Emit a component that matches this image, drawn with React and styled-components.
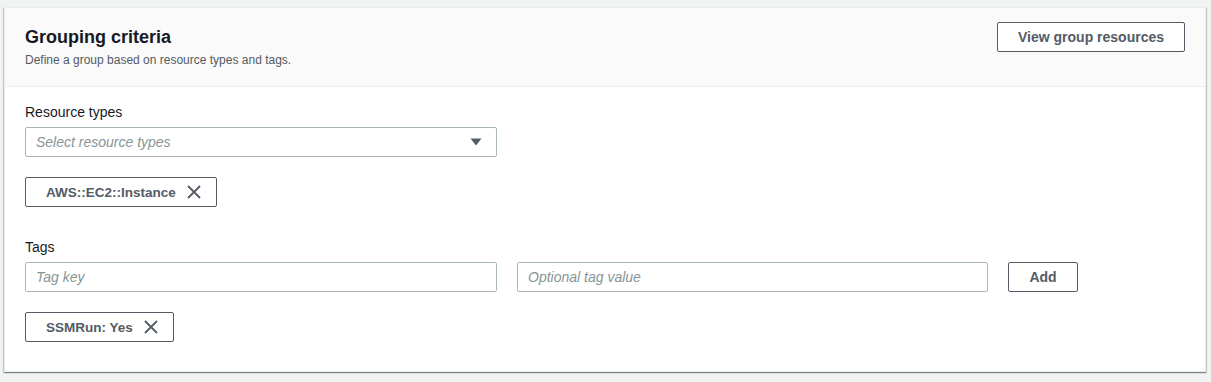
import React from "react";
import styled, { createGlobalStyle } from "styled-components";

const Global = createGlobalStyle`
  html, body { margin: 0; padding: 0; background: #f2f3f3; }
  body { font-family: "Liberation Sans", Arial, sans-serif; color: #16191f; }
  * { box-sizing: border-box; }
`;

const Page = styled.div`
  padding: 7px 5px 9px 4px;
`;

const Card = styled.section`
  background: #fff;
  border: 1px solid #eaeded;
  box-shadow: 0 1px 1px 0 rgba(0, 28, 36, 0.3), 1px 1px 1px 0 rgba(0, 28, 36, 0.15),
    -1px 1px 1px 0 rgba(0, 28, 36, 0.15);
`;

const Header = styled.header`
  display: flex;
  justify-content: space-between;
  align-items: flex-start;
  background: #fafafa;
  border-bottom: 1px solid #eaeded;
  padding: 14px 20px 18px 20px;
`;

const HeadText = styled.div`
  padding-top: 4px;
`;

const Title = styled.h2`
  margin: 0;
  font-size: 18px;
  line-height: 22px;
  font-weight: 700;
  color: #16191f;
`;

const Subtitle = styled.p`
  margin: 4px 0 0;
  font-size: 12px;
  line-height: 16px;
  color: #545b64;
`;

const Button = styled.button`
  height: 30px;
  padding: 0 ${(p) => (p.$narrow ? "0" : "20px")};
  width: ${(p) => (p.$narrow ? "70px" : "auto")};
  background: #fff;
  border: 1px solid #545b64;
  border-radius: 2px;
  color: #545b64;
  font-family: "Liberation Sans", Arial, sans-serif;
  font-size: 14px;
  font-weight: 700;
  flex: none;
`;

const Body = styled.div`
  padding: 15px 20px 29px 20px;
  display: flex;
  flex-direction: column;
`;

const Label = styled.label`
  font-size: 14px;
  line-height: 20px;
  color: #16191f;
  margin-top: ${(p) => p.$top || "0"};
`;

const Row = styled.div`
  display: flex;
  gap: 20px;
  margin-top: 5px;
`;

const SelectBox = styled.div`
  width: 472px;
  height: 30px;
  margin-top: 5px;
  border: 1px solid #aab7b8;
  border-radius: 2px;
  display: flex;
  align-items: center;
  justify-content: space-between;
  padding: 0 14px 0 10px;
  font-size: 14px;
  font-style: italic;
  color: #879596;
  background: #fff;
`;

const TextInput = styled.input`
  width: ${(p) => p.$w || "472px"};
  height: 30px;
  border: 1px solid #aab7b8;
  border-radius: 2px;
  padding: 0 10px;
  font-family: "Liberation Sans", Arial, sans-serif;
  font-size: 14px;
  color: #16191f;
  background: #fff;
  outline: none;
  &::placeholder {
    color: #879596;
    font-style: italic;
  }
`;

const Token = styled.div`
  align-self: flex-start;
  margin-top: 20px;
  height: 30px;
  display: inline-flex;
  align-items: center;
  gap: 10px;
  padding: 0 14px 0 20px;
  border: 1px solid #545b64;
  border-radius: 2px;
  font-size: 13.5px;
  font-weight: 700;
  color: #545b64;
  background: #fff;
`;

const Caret = () => (
  <svg width="12" height="8" viewBox="0 0 12 8">
    <path d="M0.5 0.5 L11.5 0.5 L6 7.5 Z" fill="#545b64" />
  </svg>
);

const Close = () => (
  <svg width="16" height="16" viewBox="0 0 16 16">
    <path d="M2 2 L14 14 M14 2 L2 14" stroke="#545b64" strokeWidth="1.8" fill="none" />
  </svg>
);

export default function App() {
  return (
    <>
      <Global />
      <Page>
        <Card>
          <Header>
            <HeadText>
              <Title>Grouping criteria</Title>
              <Subtitle>Define a group based on resource types and tags.</Subtitle>
            </HeadText>
            <Button>View group resources</Button>
          </Header>
          <Body>
            <Label>Resource types</Label>
            <SelectBox>
              <span>Select resource types</span>
              <Caret />
            </SelectBox>
            <Token>
              <span>AWS::EC2::Instance</span>
              <Close />
            </Token>
            <Label $top="30px">Tags</Label>
            <Row>
              <TextInput placeholder="Tag key" />
              <TextInput $w="471px" placeholder="Optional tag value" />
              <Button $narrow>Add</Button>
            </Row>
            <Token>
              <span>SSMRun: Yes</span>
              <Close />
            </Token>
          </Body>
        </Card>
      </Page>
    </>
  );
}
